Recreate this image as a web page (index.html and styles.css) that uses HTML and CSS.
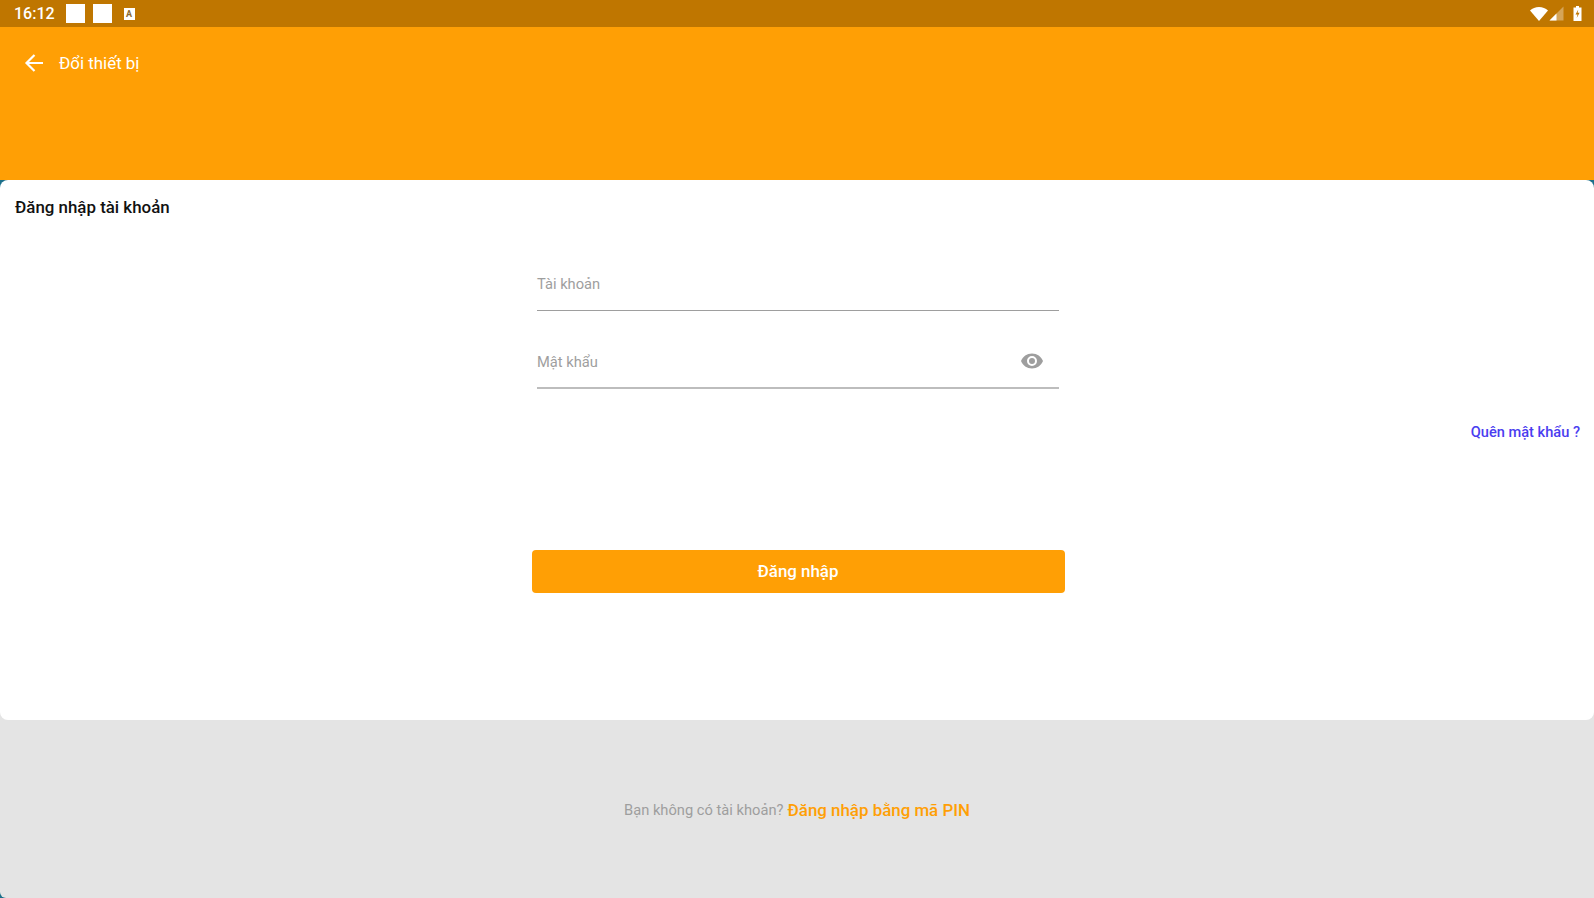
FILE: index.html
```html
<!DOCTYPE html>
<html lang="en">
<head>
    <meta charset="UTF-8">
    <meta name="viewport" content="width=device-width, initial-scale=1.0">
    <title>Đăng nhập</title>
    <link rel="stylesheet" href="styles.css">
</head>
<body>
<div class="status-bar">
    <span class="time">16:12</span>
    <span class="notif-box"></span>
    <span class="notif-box"></span>
    <span class="notif-app">A</span>
    <div class="status-icons">
        <svg width="18" height="15" viewBox="0 0 18 15"><path d="M0 4.600C2.400 2.400 5.500 1 9 1s6.600 1.400 9 3.600L9 15z" fill="#fff"/></svg>
        <svg class="signal" width="15" height="15" viewBox="0 0 15 15"><path d="M14.500.5v14H.5z" fill="#fff" fill-opacity=".35"/><path d="M7.500 7.500v7h-7z" fill="#fff"/></svg>
        <svg width="9" height="15" viewBox="0 0 9 15"><path d="M3 0h3v1.500h2.500V15H.5V1.500H3z" fill="#fff"/><path d="M5.300 3.500 2.500 8.500h2l-.8 3.500 2.900-5.200h-2z" fill="#bf7600"/></svg>
    </div>
</div>

<header class="header">
    <svg class="back" width="24" height="24" viewBox="0 0 24 24"><path d="M21 12H4.500M12.500 4 4.500 12l8 8" fill="none" stroke="#fff" stroke-width="2.200"/></svg>
    <span>Đổi thiết bị</span>
</header>

<main class="card">
    <h1 class="title">Đăng nhập tài khoản</h1>
    <div class="form">
        <div class="field">Tài khoản</div>
        <div class="field field-password">
            <span>Mật khẩu</span>
            <svg class="eye" width="24" height="24" viewBox="0 0 24 24"><path d="M12 4.500C7 4.500 2.700 7.600 1 12c1.700 4.400 6 7.500 11 7.500s9.300-3.100 11-7.500c-1.700-4.400-6-7.500-11-7.500zM12 17a5 5 0 1 1 0-10 5 5 0 0 1 0 10zm0-8a3 3 0 1 0 0 6 3 3 0 0 0 0-6z" fill="#9e9e9e"/></svg>
        </div>
    </div>
    <a class="forgot">Quên mật khẩu ?</a>
    <button class="login">Đăng nhập</button>
</main>

<footer class="footer">
    <span>Bạn không có tài khoản?</span>
    <a class="pin-link">Đăng nhập bằng mã PIN</a>
</footer>
</body>
</html>
```

FILE: styles.css
```css
* {
    box-sizing: border-box;
}
html, body {
    height: 100%;
}
body {
    margin: 0;
    display: flex;
    flex-direction: column;
    overflow: hidden;
    background-color: #1b6f8a;
    font-family: Roboto, "Liberation Sans", sans-serif;
}
.status-bar {
    height: 27px;
    padding: 0 12px 0 14px;
    display: flex;
    align-items: center;
    background-color: #bf7600;
    color: white;
}
.time {
    font-size: 16px;
    font-weight: 500;
    margin-right: 11px;
}
.notif-box {
    width: 19px;
    height: 19px;
    margin-right: 8px;
    background-color: white;
}
.notif-app {
    width: 11px;
    height: 12px;
    margin-left: 4px;
    background-color: white;
    color: #8a6a30;
    font-size: 9px;
    font-weight: 700;
    line-height: 12px;
    text-align: center;
}
.status-icons {
    margin-left: auto;
    display: flex;
    align-items: center;
    gap: 1px;
}
.signal {
    margin-right: 8px;
}
.header {
    height: 153px;
    padding: 24px 0 0 22px;
    display: flex;
    align-items: flex-start;
    gap: 13px;
    background-color: #ff9f05;
    color: white;
    font-size: 16.9px;
    line-height: 24px;
}
.card {
    height: 540px;
    padding: 16px 14px 0 15px;
    display: flex;
    flex-direction: column;
    background-color: white;
    border-radius: 8px;
    z-index: 1;
}
.title {
    margin: 0;
    font-size: 16.9px;
    font-weight: 500;
    line-height: 22px;
    color: #111;
}
.form {
    width: 522px;
    margin: 36px 0 0 522px;
}
.field {
    height: 57px;
    padding-top: 4px;
    display: flex;
    align-items: center;
    justify-content: space-between;
    border-bottom: 1px solid #9e9e9e;
    font-size: 14.7px;
    color: #9e9e9e;
}
.field-password {
    margin-top: 21px;
    border-bottom: 2px solid #bdbdbd;
}
.eye {
    margin: -2px 15px 0 0;
}
.forgot {
    margin-top: 33px;
    align-self: flex-end;
    color: #4a3df0;
    font-size: 14.6px;
    font-weight: 500;
    line-height: 20px;
}
.login {
    width: 533px;
    height: 43px;
    margin: 108px 0 0 516.5px;
    padding-bottom: 3px;
    border: none;
    border-radius: 4px;
    background-color: #ff9f05;
    color: white;
    font-family: inherit;
    font-size: 16.9px;
    font-weight: 500;
}
.footer {
    flex: 1;
    margin-top: -10px;
    padding-top: 12px;
    display: flex;
    align-items: center;
    justify-content: center;
    gap: 4px;
    background-color: #e4e4e4;
    border-bottom-left-radius: 6px;
    color: #9e9e9e;
    font-size: 14.7px;
}
.pin-link {
    color: #ff9f05;
    font-size: 16.9px;
    font-weight: 500;
}
```
